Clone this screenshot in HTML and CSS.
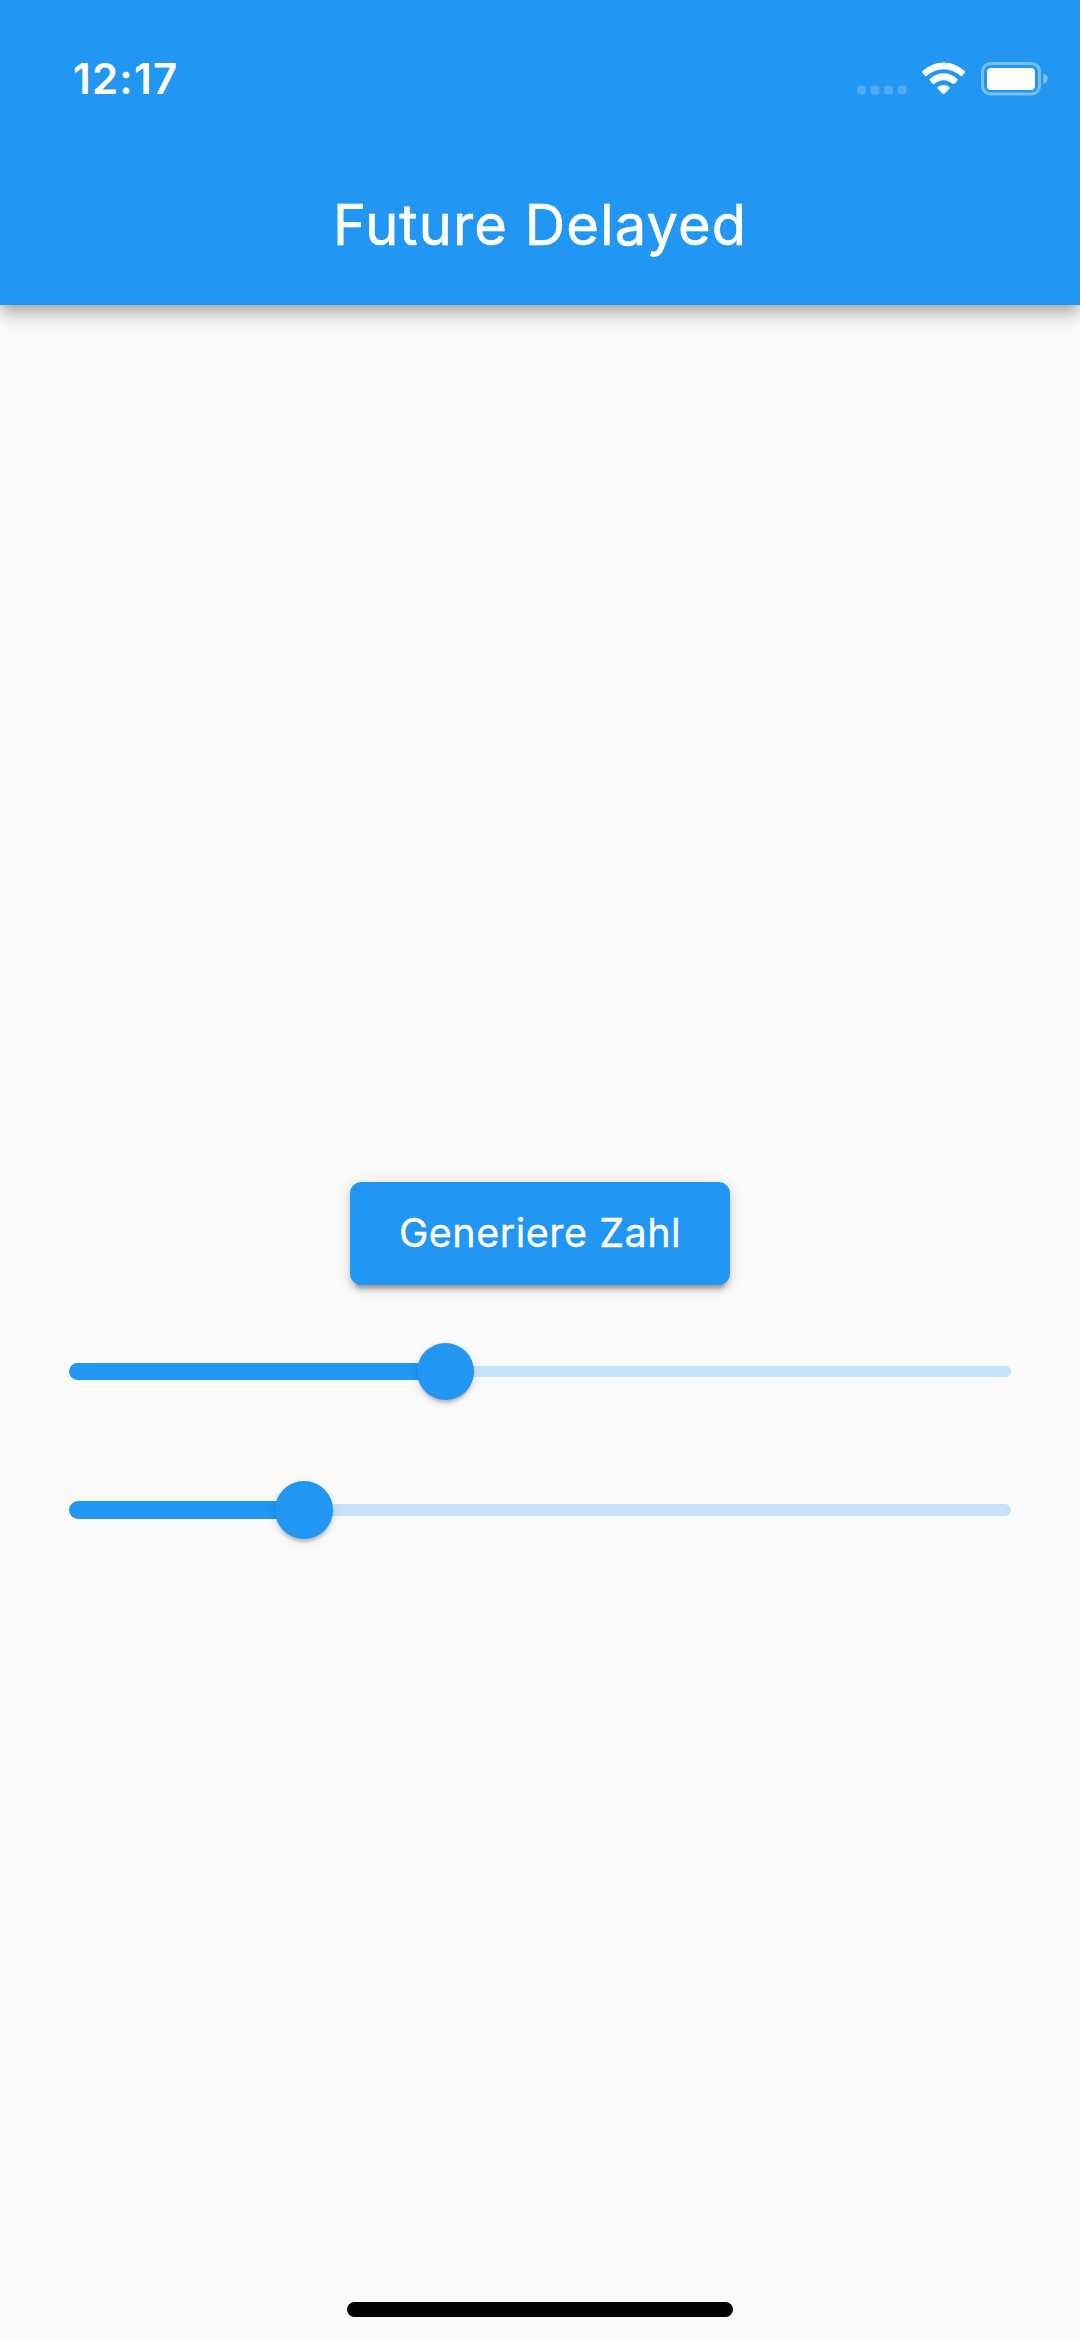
FILE: index.html
```
<!DOCTYPE html>
<html lang="de">
<head>
<meta charset="utf-8">
<title>Future Delayed</title>
<link rel="stylesheet" href="styles.css">
</head>
<body>
<div class="screen">
  <header class="app-bar">
    <div class="status-bar">
      <span class="time">12:17</span>
      <svg class="status-icons" width="196" height="40" viewBox="0 0 196 40">
        <g fill="#fff" fill-opacity=".2">
          <rect x="1" y="25.5" width="9" height="9" rx="3"/>
          <rect x="14.5" y="25.5" width="9" height="9" rx="3"/>
          <rect x="28" y="25.5" width="9" height="9" rx="3"/>
          <rect x="41.5" y="25.5" width="9" height="9" rx="3"/>
        </g>
        <g fill="#fff">
          <path d="M66.3 12.8Q65.6 12 66.4 11.2C79 -0.4 96.200 -0.4 108.800 11.2Q109.600 12 108.900 12.800L106.200 15.700Q105.300 16.500 104.400 15.700C95 7 80.200 7 70.800 15.700Q69.900 16.500 69 15.700Z"/>
          <path d="M73.900 20.700Q73.100 19.900 73.900 19.100C82 11.400 93.200 11.400 101.300 19.100Q102.100 19.900 101.300 20.700L98.400 23.700Q97.600 24.500 96.700 23.700C91.200 19 84 19 78.500 23.700Q77.600 24.500 76.800 23.700Z"/>
          <path d="M81.600 28.600Q80.900 27.800 81.700 27.100C85.200 24.200 90 24.200 93.500 27.100Q94.300 27.800 93.600 28.600L88.500 33.700Q87.600 34.500 86.700 33.700Z"/>
          <rect x="131" y="8" width="48" height="22" rx="4"/>
        </g>
        <rect x="126.500" y="3.500" width="57" height="30.500" rx="8" fill="none" stroke="#fff" stroke-opacity=".4" stroke-width="3"/>
        <path d="M187.500 13.500C193 15.500 193 22 187.500 24Z" fill="#fff" fill-opacity=".45"/>
      </svg>
    </div>
    <h1 class="title">Future Delayed</h1>
  </header>
  <main class="content">
    <div class="button-row"><button class="button" type="button">Generiere Zahl</button></div>
    <div class="slider">
      <div class="active" style="width: 376.600px"></div><div class="thumb"></div><div class="inactive"></div>
    </div>
    <div class="slider">
      <div class="active" style="width: 235.200px"></div><div class="thumb"></div><div class="inactive"></div>
    </div>
  </main>
  <footer class="home-area"><div class="home-indicator"></div></footer>
</div>
</body>
</html>
```
FILE: styles.css
```
* { box-sizing: border-box; }
body { margin: 0; font-family: Inter, "Liberation Sans", sans-serif; }
.screen {
  width: 1080px;
  height: 2340px;
  display: flex;
  flex-direction: column;
  overflow: hidden;
  background: #fafafa;
}
.app-bar {
  height: 305.300px;
  flex: none;
  background: #2196f3;
  color: #fff;
  box-shadow: 0 5.760px 11.520px -2.900px rgba(0,0,0,.2), 0 11.520px 14.400px rgba(0,0,0,.14), 0 2.900px 28.800px rgba(0,0,0,.12);
}
.status-bar {
  height: 144px;
  padding: 60px 28px 0 73px;
  display: flex;
  justify-content: space-between;
  align-items: flex-start;
}
.time { font-size: 42px; line-height: 38px; font-weight: 600; letter-spacing: 1.200px; }
.title {
  margin: 0;
  height: 161px;
  line-height: 163px;
  text-align: center;
  font-size: 56px;
  font-weight: 400;
  letter-spacing: 1.100px;
  -webkit-text-stroke: .600px #fff;
}
.content {
  flex: 1;
  display: flex;
  flex-direction: column;
  padding-top: 859px;
}
.button-row, .slider { height: 138.240px; display: flex; align-items: center; }
.button-row { justify-content: center; }
.button {
  width: 380px;
  height: 103.700px;
  padding: 0 0 2px;
  border: 0;
  border-radius: 11.500px;
  background: #2196f3;
  color: #fff;
  font: 400 39.500px/102px Inter, "Liberation Sans", sans-serif;
  letter-spacing: .500px;
  -webkit-text-stroke: .300px #fff;
  box-shadow: 0 8.600px 2.900px -5.800px rgba(0,0,0,.2), 0 5.800px 5.800px rgba(0,0,0,.14), 0 2.900px 14.400px rgba(0,0,0,.12);
}
.slider { padding: 0 69.100px; }
.active { height: 17.300px; border-radius: 9px 0 0 9px; background: #2196f3; }
.thumb {
  flex: none;
  width: 57.600px;
  height: 57.600px;
  margin: 0 -28.800px;
  border-radius: 50%;
  background: #2196f3;
  box-shadow: 0 5.800px 2.900px -2.900px rgba(0,0,0,.1), 0 2.900px 2.900px rgba(0,0,0,.08), 0 2.900px 8.600px rgba(0,0,0,.12);
  z-index: 1;
}
.inactive { flex: 1; height: 11.500px; border-radius: 0 6px 6px 0; background: #c6e2f9; }
.home-area { height: 38px; display: flex; justify-content: center; }
.home-indicator { width: 386px; height: 15px; border-radius: 8px; background: #000; }
```
